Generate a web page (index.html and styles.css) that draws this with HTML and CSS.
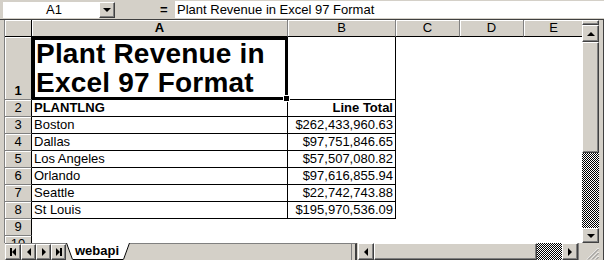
FILE: index.html
```html
<!DOCTYPE html>
<html lang="en">
<head>
  <meta charset="UTF-8">
  <title>Plant Revenue</title>
  <link rel="stylesheet" href="styles.css">
</head>
<body>

<div class="formula-bar">
  <div class="name-box">A1</div>
  <div class="btn name-drop"><span class="tri-down"></span></div>
  <div class="equals">=</div>
  <div class="formula">Plant Revenue in Excel 97 Format</div>
</div>

<div class="sheet">
  <div class="grid-wrap">
    <div class="grid">
      <!-- column headers -->
      <div class="hd corner"></div>
      <div class="hd col active">A</div>
      <div class="hd col">B</div>
      <div class="hd col">C</div>
      <div class="hd col">D</div>
      <div class="hd col last">E</div>

      <!-- row 1 -->
      <div class="hd row active tall">1</div>
      <div class="c title">Plant Revenue in Excel 97 Format<span class="fill-handle"></span></div>
      <div class="c box"></div>
      <div class="c"></div><div class="c"></div><div class="c"></div>

      <div class="hd row">2</div>
      <div class="c box bold">PLANTLNG</div>
      <div class="c box bold num">Line Total</div>
      <div class="c"></div><div class="c"></div><div class="c"></div>

      <div class="hd row">3</div>
      <div class="c box">Boston</div>
      <div class="c box num">$262,433,960.63</div>
      <div class="c"></div><div class="c"></div><div class="c"></div>

      <div class="hd row">4</div>
      <div class="c box">Dallas</div>
      <div class="c box num">$97,751,846.65</div>
      <div class="c"></div><div class="c"></div><div class="c"></div>

      <div class="hd row">5</div>
      <div class="c box">Los Angeles</div>
      <div class="c box num">$57,507,080.82</div>
      <div class="c"></div><div class="c"></div><div class="c"></div>

      <div class="hd row">6</div>
      <div class="c box">Orlando</div>
      <div class="c box num">$97,616,855.94</div>
      <div class="c"></div><div class="c"></div><div class="c"></div>

      <div class="hd row">7</div>
      <div class="c box">Seattle</div>
      <div class="c box num">$22,742,743.88</div>
      <div class="c"></div><div class="c"></div><div class="c"></div>

      <div class="hd row">8</div>
      <div class="c box">St Louis</div>
      <div class="c box num">$195,970,536.09</div>
      <div class="c"></div><div class="c"></div><div class="c"></div>

      <div class="hd row">9</div>
      <div class="c"></div><div class="c"></div>
      <div class="c"></div><div class="c"></div><div class="c"></div>

      <div class="hd row">10</div>
      <div class="c"></div><div class="c"></div>
      <div class="c"></div><div class="c"></div><div class="c"></div>
    </div>
  </div>

  <div class="vscroll">
    <div class="btn split-v"></div>
    <div class="btn sbtn"><span class="tri-up"></span></div>
    <div class="btn vthumb"></div>
    <div class="checker vtrack"></div>
    <div class="btn sbtn down"><span class="tri-down"></span></div>
  </div>
</div>

<div class="tab-bar">
  <div class="tab-nav">
    <div class="btn nbtn"><span class="bar"></span><span class="tri-left"></span></div>
    <div class="btn nbtn"><span class="tri-left"></span></div>
    <div class="btn nbtn"><span class="tri-right"></span></div>
    <div class="btn nbtn"><span class="tri-right"></span><span class="bar"></span></div>
  </div>
  <div class="tab">
    <svg class="slant" width="7" height="17" viewBox="0 0 7 17">
      <polygon points="0,0 7,0 7,16 6,16" fill="#fff"/>
      <line x1="0.5" y1="0" x2="6.5" y2="16.5" stroke="#000" stroke-width="1"/>
    </svg>
    <span class="tab-label">webapi</span>
    <svg class="slant" width="7" height="17" viewBox="0 0 7 17">
      <polygon points="0,0 7,0 1,16 0,16" fill="#fff"/>
      <line x1="6.5" y1="0" x2="0.5" y2="16.5" stroke="#000" stroke-width="1"/>
    </svg>
  </div>
  <div class="tab-space"></div>
  <div class="split-h"></div>
  <div class="hscroll">
    <div class="btn sbtn-h"><span class="tri-left"></span></div>
    <div class="btn hthumb"></div>
    <div class="checker htrack"></div>
    <div class="btn sbtn-h"><span class="tri-right"></span></div>
  </div>
  <div class="size-grip">
    <svg width="20" height="17" viewBox="0 0 20 17">
      <line x1="8" y1="16.5" x2="19.5" y2="5" stroke="#fff"/>
      <line x1="9" y1="16.5" x2="19.5" y2="6" stroke="#808080"/>
      <line x1="12" y1="16.5" x2="19.5" y2="9" stroke="#fff"/>
      <line x1="13" y1="16.5" x2="19.5" y2="10" stroke="#808080"/>
      <line x1="16" y1="16.5" x2="19.5" y2="13" stroke="#fff"/>
      <line x1="17" y1="16.5" x2="19.5" y2="14" stroke="#808080"/>
    </svg>
  </div>
</div>

</body>
</html>
```

FILE: styles.css
```css
* {
  box-sizing: border-box;
}
body {
  margin: 0;
  width: 604px;
  height: 260px;
  overflow: hidden;
  background: #d4d0c8;
  font-family: "Liberation Sans", Arial, sans-serif;
  font-size: 13px;
  color: #000;
}

/* shared 3d button look */
.btn {
  background: #d4d0c8;
  border: 1px solid;
  border-color: #fff #404040 #404040 #fff;
  box-shadow: inset -1px -1px #808080;
  display: flex;
  align-items: center;
  justify-content: center;
}
.checker {
  background-color: #fff;
  background-image: conic-gradient(#000 25%, transparent 0 50%, #000 0 75%, transparent 0);
  background-size: 2px 2px;
}
.tri-down, .tri-up, .tri-left, .tri-right {
  width: 0;
  height: 0;
  border: 4px solid transparent;
}
.tri-down { border-top-color: #000; border-bottom-width: 0; }
.tri-up { border-bottom-color: #000; border-top-width: 0; }
.tri-left { border-right-color: #000; border-left-width: 0; }
.tri-right { border-left-color: #000; border-right-width: 0; }

/* formula bar */
.formula-bar {
  height: 19px;
  display: flex;
  align-items: center;
  padding-left: 3px;
}
.name-box {
  width: 96px;
  height: 16px;
  background: #fff;
  text-align: center;
  line-height: 16px;
  padding-left: 6px;
}
.name-drop {
  width: 16px;
  height: 16px;
}
.equals {
  margin-left: 45px;
  width: 10px;
  font-weight: bold;
}
.formula {
  flex: 1;
  height: 17px;
  margin-left: 5px;
  padding-left: 2px;
  background: #fff;
  line-height: 17px;
}

/* sheet */
.sheet {
  display: flex;
  height: 224px;
  border-top: 1px solid #404040;
  padding-left: 4px;
  padding-right: 4px;
  border-right: 1px solid #404040;
}
.grid-wrap {
  height: 223px;
  overflow: hidden;
  border-left: 1px solid #808080;
  background: #fff;
}
.grid {
  display: grid;
  grid-template-columns: 27px 256px 108px 64px 64px 59px;
  grid-template-rows: 17px 63px repeat(9, 17px);
}
.hd {
  background: #d4d0c8;
  text-align: center;
  line-height: 16px;
  border-right: 1px solid #808080;
  border-bottom: 1px solid #808080;
  box-shadow: inset 1px 1px #fff;
}
.hd.col {
  border-bottom-color: #000;
}
.hd.col.last {
  border-right: none;
}
.hd.row {
  border-right-color: #000;
}
.hd.corner {
  border-bottom-color: #000;
  border-right-color: #000;
}
.hd.active {
  font-weight: bold;
}
.hd.tall {
  display: flex;
  align-items: flex-end;
  justify-content: center;
}
.c {
  padding: 0 2px;
  line-height: 16px;
  white-space: nowrap;
  overflow: hidden;
}
.c.box {
  border-right: 1px solid #000;
  border-bottom: 1px solid #000;
}
.c.num {
  text-align: right;
}
.c.bold {
  font-weight: bold;
}
.c.title {
  position: relative;
  overflow: visible;
  white-space: normal;
  border: 3px solid #000;
  padding: 0 0 0 1px;
  font-size: 28px;
  font-weight: bold;
  line-height: 28.5px;
  letter-spacing: 0.2px;
}
.fill-handle {
  position: absolute;
  right: -5px;
  bottom: -5px;
  width: 7px;
  height: 7px;
  background: #000;
  border: 1px solid #fff;
}

/* vertical scrollbar */
.vscroll {
  width: 17px;
  display: flex;
  flex-direction: column;
}
.split-v {
  height: 5px;
}
.sbtn {
  height: 17px;
}
.sbtn.down {
  height: 15px;
}
.vthumb {
  height: 111px;
}
.vtrack {
  flex: 1;
}

/* tabs + horizontal scrollbar */
.tab-bar {
  height: 17px;
  display: flex;
  padding-left: 5px;
  padding-right: 4px;
  border-right: 1px solid #404040;
}
.tab-nav {
  display: flex;
  width: 61px;
  border-top: 1px solid #808080;
}
.nbtn {
  width: 15px;
  height: 16px;
}
.nbtn:first-child {
  width: 16px;
}
.nbtn .bar {
  width: 2px;
  height: 8px;
  background: #000;
}
.tab {
  display: flex;
}
.slant {
  display: block;
}
.tab-label {
  background: #fff;
  font-weight: bold;
  line-height: 16px;
  height: 17px;
  border-bottom: 1px solid #000;
  padding: 0 4px 0 2px;
}
.tab-space {
  flex: 1;
  border-top: 1px solid #808080;
}
.split-h {
  width: 6px;
  border-left: 1px solid #808080;
  border-right: 2px solid #404040;
  border-top: 1px solid #808080;
  margin-right: 1px;
}
.hscroll {
  display: flex;
  width: 220px;
}
.sbtn-h {
  width: 16px;
  height: 17px;
}
.hthumb {
  width: 163px;
  height: 17px;
}
.htrack {
  flex: 1;
}
.size-grip {
  width: 21px;
  border-left: 1px solid #808080;
}
.size-grip svg {
  display: block;
}
```
